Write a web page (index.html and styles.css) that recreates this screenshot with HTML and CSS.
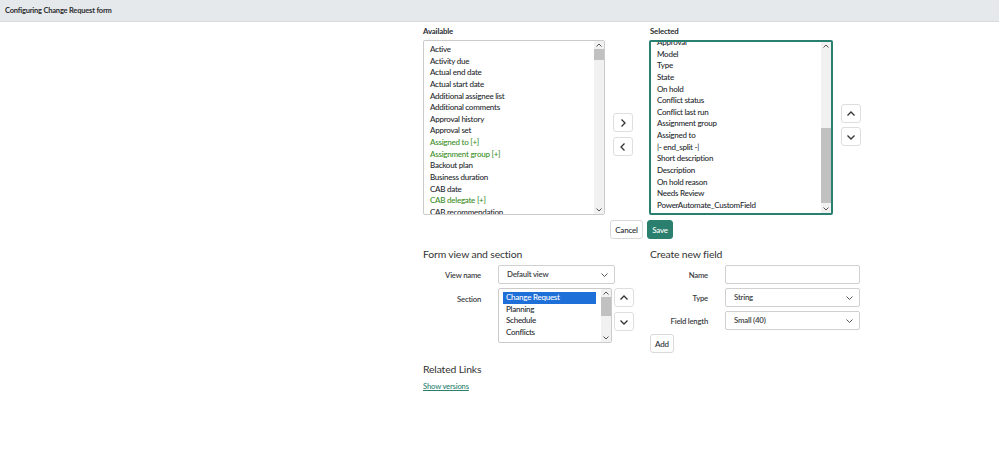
FILE: index.html
```html
<!DOCTYPE html>
<html>
<head>
<meta charset="utf-8">
<link rel="stylesheet" href="styles.css">
</head>
<body>
<div class="header">Configuring Change Request form</div>
<div class="main">
  <div class="slush">
    <div class="col col-avail">
      <div class="col-label">Available</div>
      <div class="listbox avail">
        <div class="items">
          <div class="item">Active</div>
          <div class="item">Activity due</div>
          <div class="item">Actual end date</div>
          <div class="item">Actual start date</div>
          <div class="item">Additional assignee list</div>
          <div class="item">Additional comments</div>
          <div class="item">Approval history</div>
          <div class="item">Approval set</div>
          <div class="item ref">Assigned to [+]</div>
          <div class="item ref">Assignment group [+]</div>
          <div class="item">Backout plan</div>
          <div class="item">Business duration</div>
          <div class="item">CAB date</div>
          <div class="item ref">CAB delegate [+]</div>
          <div class="item">CAB recommendation</div>
        </div>
        <div class="sbar">
          <div class="sarrow"><svg width="6" height="4" viewBox="0 0 6 4"><path d="M0.5 3.5L3 1l2.5 2.5" fill="none" stroke="#555" stroke-width="1"/></svg></div>
          <div class="strack"><div class="sthumb avail-thumb"></div></div>
          <div class="sarrow"><svg width="6" height="4" viewBox="0 0 6 4"><path d="M0.5 0.5L3 3l2.5-2.5" fill="none" stroke="#555" stroke-width="1"/></svg></div>
        </div>
      </div>
    </div>
    <div class="mid-btns">
      <button class="icon-btn"><svg width="8" height="10" viewBox="0 0 8 10"><path d="M2.5 1.5l3.5 3.5-3.5 3.5" fill="none" stroke="#333" stroke-width="1.3"/></svg></button>
      <button class="icon-btn"><svg width="8" height="10" viewBox="0 0 8 10"><path d="M5.5 1.5L2 5l3.5 3.5" fill="none" stroke="#333" stroke-width="1.3"/></svg></button>
    </div>
    <div class="col col-sel">
      <div class="col-label">Selected</div>
      <div class="listbox sel">
        <div class="items sel-items">
          <div class="item">Approval</div>
          <div class="item">Model</div>
          <div class="item">Type</div>
          <div class="item">State</div>
          <div class="item">On hold</div>
          <div class="item">Conflict status</div>
          <div class="item">Conflict last run</div>
          <div class="item">Assignment group</div>
          <div class="item">Assigned to</div>
          <div class="item">|- end_split -|</div>
          <div class="item">Short description</div>
          <div class="item">Description</div>
          <div class="item">On hold reason</div>
          <div class="item">Needs Review</div>
          <div class="item">PowerAutomate_CustomField</div>
        </div>
        <div class="sbar">
          <div class="sarrow"><svg width="6" height="4" viewBox="0 0 6 4"><path d="M0.5 3.5L3 1l2.5 2.5" fill="none" stroke="#555" stroke-width="1"/></svg></div>
          <div class="strack"><div class="sthumb sel-thumb"></div></div>
          <div class="sarrow"><svg width="6" height="4" viewBox="0 0 6 4"><path d="M0.5 0.5L3 3l2.5-2.5" fill="none" stroke="#555" stroke-width="1"/></svg></div>
        </div>
      </div>
      <div class="actions">
        <button class="btn cancel">Cancel</button>
        <button class="btn primary">Save</button>
      </div>
    </div>
    <div class="right-btns">
      <button class="icon-btn"><svg width="10" height="8" viewBox="0 0 10 8"><path d="M1.5 5.5L5 2l3.5 3.5" fill="none" stroke="#333" stroke-width="1.3"/></svg></button>
      <button class="icon-btn"><svg width="10" height="8" viewBox="0 0 10 8"><path d="M1.5 2.5L5 6l3.5-3.5" fill="none" stroke="#333" stroke-width="1.3"/></svg></button>
    </div>
  </div>

  <div class="lower">
    <div class="panel panel-view">
      <h2 class="title">Form view and section</h2>
      <div class="frow">
        <div class="flabel">View name</div>
        <div class="select w-view">Default view<svg class="caret" width="7" height="4" viewBox="0 0 7 4"><path d="M0.5 0.5L3.5 3.5l3-3" fill="none" stroke="#555" stroke-width="1"/></svg></div>
      </div>
      <div class="frow top">
        <div class="flabel">Section</div>
        <div class="listbox section">
          <div class="items sec-items">
            <div class="item active">Change Request</div>
            <div class="item">Planning</div>
            <div class="item">Schedule</div>
            <div class="item">Conflicts</div>
          </div>
          <div class="sbar">
            <div class="sarrow"><svg width="6" height="4" viewBox="0 0 6 4"><path d="M0.5 3.5L3 1l2.5 2.5" fill="none" stroke="#555" stroke-width="1"/></svg></div>
            <div class="strack"><div class="sthumb sec-thumb"></div></div>
            <div class="sarrow"><svg width="6" height="4" viewBox="0 0 6 4"><path d="M0.5 0.5L3 3l2.5-2.5" fill="none" stroke="#555" stroke-width="1"/></svg></div>
          </div>
        </div>
        <div class="sec-btns">
          <button class="icon-btn"><svg width="10" height="8" viewBox="0 0 10 8"><path d="M1.5 5.5L5 2l3.5 3.5" fill="none" stroke="#333" stroke-width="1.3"/></svg></button>
          <button class="icon-btn"><svg width="10" height="8" viewBox="0 0 10 8"><path d="M1.5 2.5L5 6l3.5-3.5" fill="none" stroke="#333" stroke-width="1.3"/></svg></button>
        </div>
      </div>
      <h2 class="title related">Related Links</h2>
      <a class="link" href="#">Show versions</a>
    </div>
    <div class="panel panel-new">
      <h2 class="title">Create new field</h2>
      <div class="frow">
        <div class="flabel">Name</div>
        <div class="input"></div>
      </div>
      <div class="frow">
        <div class="flabel">Type</div>
        <div class="select w-new">String<svg class="caret" width="7" height="4" viewBox="0 0 7 4"><path d="M0.5 0.5L3.5 3.5l3-3" fill="none" stroke="#555" stroke-width="1"/></svg></div>
      </div>
      <div class="frow">
        <div class="flabel">Field length</div>
        <div class="select w-new">Small (40)<svg class="caret" width="7" height="4" viewBox="0 0 7 4"><path d="M0.5 0.5L3.5 3.5l3-3" fill="none" stroke="#555" stroke-width="1"/></svg></div>
      </div>
      <button class="btn add">Add</button>
    </div>
  </div>
</div>
</body>
</html>
```

FILE: styles.css
```css
* { box-sizing: border-box; }
body {
  margin: 0;
  font-family: Lato, "Liberation Sans", sans-serif;
  font-size: 8px;
  color: #25282c;
  background: #fff;
}
.header {
  height: 22px;
  background: #e6e9ec;
  border-bottom: 1px solid #d9dcdf;
  font-weight: bold;
  font-size: 7.5px;
  letter-spacing: -0.2px;
  line-height: 21px;
  padding-left: 5px;
  color: #2b2d30;
}
.main { padding-left: 423px; }
.slush { display: flex; align-items: flex-start; margin-top: 4px; }
.col-label { font-weight: bold; font-size: 7.8px; letter-spacing: -0.15px; height: 14px; line-height: 11px; color: #2b2d30; }
.col-sel .col-label { padding-left: 1px; }
.listbox {
  display: flex;
  border: 1px solid #cbcbcb;
  border-radius: 2px;
  overflow: hidden;
  background: #fff;
}
.avail { width: 182px; height: 175px; }
.sel { width: 184px; height: 175px; border: 2px solid #2a8070; }
.items { flex: 1; overflow: hidden; padding-left: 6px; padding-top: 3px; }
.sel-items { padding-left: 6px; padding-top: 0; margin-top: -5px; }
.item { height: 11.65px; line-height: 11.65px; white-space: nowrap; font-size: 8px; letter-spacing: -0.25px; font-weight: 500; }
.item.ref { color: #3a8d1e; }
.sbar {
  width: 10px;
  display: flex;
  flex-direction: column;
  background: #f1f1f1;
}
.sarrow { height: 8px; display: flex; align-items: center; justify-content: center; }
.strack { flex: 1; position: relative; }
.sthumb { position: absolute; left: 0; right: 0; background: #c1c1c1; }
.avail-thumb { top: 0; height: 11px; }
.sel-thumb { top: 78px; bottom: 2px; }
.sec-thumb { top: 0; height: 19px; }
.mid-btns { display: flex; flex-direction: column; gap: 5px; margin: 87px 16px 0 8px; }
.icon-btn {
  width: 20px; height: 19px;
  border: 1px solid #dedede;
  border-radius: 3px;
  background: #fff;
  padding: 0;
  display: flex; align-items: center; justify-content: center;
}
.right-btns { display: flex; flex-direction: column; gap: 4px; margin: 78px 0 0 8px; }
.actions { display: flex; gap: 4px; margin-top: 5px; margin-left: -39px; }
.btn {
  font-family: inherit;
  font-size: 8px;
  letter-spacing: -0.2px;
  font-weight: 500;
  height: 19px;
  padding: 0;
  border: 1px solid #d9d9d9;
  border-radius: 3px;
  background: #fff;
  color: #25282c;
}
.btn.cancel { width: 33px; }
.btn.primary { width: 26px; background: #2a7f6f; border-color: #2a7f6f; color: #fff; }
.lower { display: flex; margin-top: 7px; }
.panel { display: flex; flex-direction: column; align-items: flex-start; }
.panel-view { width: 227px; }
.panel-new { width: 220px; }
.title { font-size: 10.4px; letter-spacing: -0.15px; font-weight: normal; margin: 0 0 3px; height: 16px; line-height: 16px; color: #333; }
.frow { display: flex; align-items: center; margin-bottom: 4px; }
.frow.top { align-items: flex-start; }
.flabel { width: 58px; text-align: right; font-size: 7.7px; letter-spacing: -0.2px; font-weight: 600; color: #3a3d42; margin-right: 17px; }
.frow.top .flabel { margin-top: 6px; }
.select {
  height: 19px;
  border: 1px solid #d0d0d0;
  border-radius: 2px;
  font-size: 7.8px;
  letter-spacing: -0.2px;
  font-weight: 600;
  color: #3a3d42;
  padding-left: 8px;
  line-height: 17px;
  position: relative;
}
.caret { position: absolute; right: 6px; top: 7px; }
.w-view { width: 117px; }
.w-new { width: 135px; }
.input { width: 135px; height: 19px; border: 1px solid #d0d0d0; border-radius: 2px; }
.section { width: 114px; height: 55px; }
.sec-items { padding: 3px 5px 0 4px; }
.sec-items .item { padding-left: 3px; }
.item.active { background: #1f6fd8; color: #fff; }
.sec-btns { display: flex; flex-direction: column; gap: 5px; margin-left: 2px; }
.related { margin-top: 14px; margin-bottom: 4px; }
.link { font-size: 7.6px; letter-spacing: -0.15px; line-height: 10px; color: #2a7f6f; text-decoration: underline; font-weight: 500; }
.btn.add { width: 24px; }
```
